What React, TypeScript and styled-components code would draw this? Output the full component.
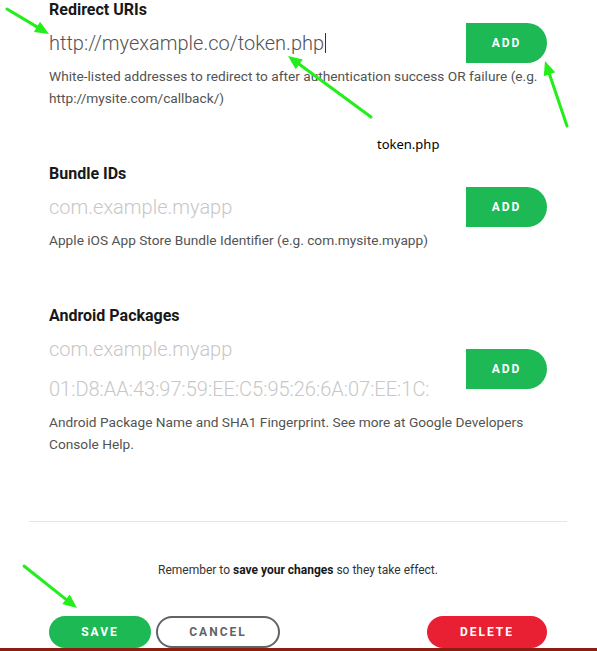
import React from 'react'
import styled, { createGlobalStyle } from 'styled-components'

const GREEN = '#1db954'
const ARROW = '#22ee1a'

const GlobalStyle = createGlobalStyle`
  html, body {
    margin: 0;
    padding: 0;
    background: #ffffff;
  }
  body {
    font-family: Roboto, "Liberation Sans", Arial, sans-serif;
    -webkit-font-smoothing: antialiased;
  }
`

type ArrowProps = { from: [number, number]; to: [number, number] }

const Arrow: React.FC<ArrowProps> = ({ from, to }) => {
  const [x1, y1] = from
  const [x2, y2] = to
  const angle = Math.atan2(y2 - y1, x2 - x1)
  const len = 14
  const half = 6
  const bx = x2 - len * Math.cos(angle)
  const by = y2 - len * Math.sin(angle)
  const px = -Math.sin(angle) * half
  const py = Math.cos(angle) * half
  const head = `${x2},${y2} ${bx + px},${by + py} ${bx - px},${by - py}`
  return (
    <g>
      <line x1={x1} y1={y1} x2={bx} y2={by} stroke={ARROW} strokeWidth={3} strokeLinecap='round' />
      <polygon points={head} fill={ARROW} />
    </g>
  )
}

const App: React.FC = () => {
  return (
    <>
      <GlobalStyle />
      <Page>
        <Content>
          <Section>
            <Label>Redirect URIs</Label>
            <FieldRow>
              <Inputs>
                <FocusedField>
                  http://myexample.co/token.php
                  <Caret />
                </FocusedField>
              </Inputs>
              <AddButton>ADD</AddButton>
            </FieldRow>
            <Help>
              White-listed addresses to redirect to after authentication success OR failure (e.g.
              http://mysite.com/callback/)
            </Help>
          </Section>

          <Section>
            <Label>Bundle IDs</Label>
            <FieldRow>
              <Inputs>
                <TextInput placeholder='com.example.myapp' />
              </Inputs>
              <AddButton>ADD</AddButton>
            </FieldRow>
            <Help>Apple iOS App Store Bundle Identifier (e.g. com.mysite.myapp)</Help>
          </Section>

          <Section>
            <Label>Android Packages</Label>
            <FieldRow>
              <Inputs>
                <TextInput placeholder='com.example.myapp' />
                <TextInput placeholder='01:D8:AA:43:97:59:EE:C5:95:26:6A:07:EE:1C:' />
              </Inputs>
              <AddButton>ADD</AddButton>
            </FieldRow>
            <Help>
              Android Package Name and SHA1 Fingerprint. See more at Google Developers Console
              Help.
            </Help>
          </Section>
        </Content>

        <Divider />

        <Note>
          Remember to <strong>save your changes</strong> so they take effect.
        </Note>

        <Footer>
          <ButtonGroup>
            <PillButton variant='save'>SAVE</PillButton>
            <PillButton variant='cancel'>CANCEL</PillButton>
          </ButtonGroup>
          <PillButton variant='delete'>DELETE</PillButton>
        </Footer>
        <BottomBar />

        <Annotations>
          <svg width='597' height='651' viewBox='0 0 597 651'>
            <Arrow from={[7, 9]} to={[49, 34]} />
            <Arrow from={[371, 117]} to={[288, 56]} />
            <Arrow from={[567, 126]} to={[545, 61]} />
            <Arrow from={[24, 566]} to={[77, 608]} />
          </svg>
          <AnnotationText>token.php</AnnotationText>
        </Annotations>
      </Page>
    </>
  )
}

const Page = styled.div`
  position: relative;
  width: 597px;
  height: 651px;
  overflow: hidden;
  padding: 0 30px 0 29px;
  box-sizing: border-box;
  display: flex;
  flex-direction: column;
`

const Content = styled.div`
  padding: 0 20px;
  display: flex;
  flex-direction: column;
  gap: 55px;
`

const Section = styled.div`
  display: flex;
  flex-direction: column;
`

const Label = styled.div`
  font-size: 16px;
  font-weight: 700;
  line-height: 20px;
  color: #181818;
`

const FieldRow = styled.div`
  display: flex;
  align-items: center;
  gap: 12px;
  margin-top: 3px;
`

const Inputs = styled.div`
  flex: 1;
  min-width: 0;
  display: flex;
  flex-direction: column;
`

const TextInput = styled.input`
  height: 40px;
  width: 100%;
  border: none;
  outline: none;
  padding: 0;
  background: transparent;
  font-family: Roboto, "Liberation Sans", Arial, sans-serif;
  font-size: 20px;
  font-weight: 300;
  color: #535353;

  &::placeholder {
    color: #c7c7c7;
  }
`

const FocusedField = styled.div`
  height: 40px;
  display: flex;
  align-items: center;
  font-size: 20px;
  font-weight: 300;
  color: #535353;
  white-space: nowrap;
`

const Caret = styled.span`
  display: inline-block;
  width: 1px;
  height: 20px;
  margin-left: 1px;
  background: #333333;
`

const AddButton = styled.button`
  width: 81px;
  height: 40px;
  flex-shrink: 0;
  border: none;
  border-radius: 0 20px 20px 0;
  background: ${GREEN};
  color: #ffffff;
  font-family: Roboto, "Liberation Sans", Arial, sans-serif;
  font-size: 12px;
  font-weight: 700;
  letter-spacing: 2px;
  cursor: pointer;
`

const Help = styled.p`
  margin: 2px 0 0;
  font-size: 13.7px;
  line-height: 22px;
  color: #535353;
`

const Divider = styled.hr`
  margin: 66px 0 0;
  border: none;
  border-top: 1px solid #e5e5e5;
`

const Note = styled.p`
  margin: 40px 0 0;
  text-align: center;
  font-size: 12px;
  line-height: 16px;
  color: #333333;

  strong {
    font-weight: 700;
    color: #181818;
  }
`

const Footer = styled.div`
  margin-top: 38px;
  padding: 0 20px;
  display: flex;
  justify-content: space-between;
`

const ButtonGroup = styled.div`
  display: flex;
  gap: 5px;
`

const PillButton = styled.button<{ variant: 'save' | 'cancel' | 'delete' }>`
  height: 32px;
  padding: 0;
  width: ${(p) => (p.variant === 'save' ? '102px' : p.variant === 'cancel' ? '124px' : '120px')};
  border-radius: 16px;
  box-sizing: border-box;
  border: ${(p) => (p.variant === 'cancel' ? '2px solid #616467' : 'none')};
  background: ${(p) =>
    p.variant === 'save' ? GREEN : p.variant === 'delete' ? '#e91f34' : '#ffffff'};
  color: ${(p) => (p.variant === 'cancel' ? '#616467' : '#ffffff')};
  font-family: Roboto, "Liberation Sans", Arial, sans-serif;
  font-size: 12px;
  font-weight: 700;
  letter-spacing: 2px;
  cursor: pointer;
`

const BottomBar = styled.div`
  position: absolute;
  left: 0;
  right: 0;
  bottom: 0;
  height: 3px;
  background: #8c1d10;
`

const Annotations = styled.div`
  position: absolute;
  inset: 0;
  pointer-events: none;

  svg {
    position: absolute;
    top: 0;
    left: 0;
  }
`

const AnnotationText = styled.span`
  position: absolute;
  left: 377px;
  top: 135px;
  font-family: "Noto Sans", "DejaVu Sans", sans-serif;
  font-size: 13px;
  line-height: 18px;
  color: #000000;
`

export default App
